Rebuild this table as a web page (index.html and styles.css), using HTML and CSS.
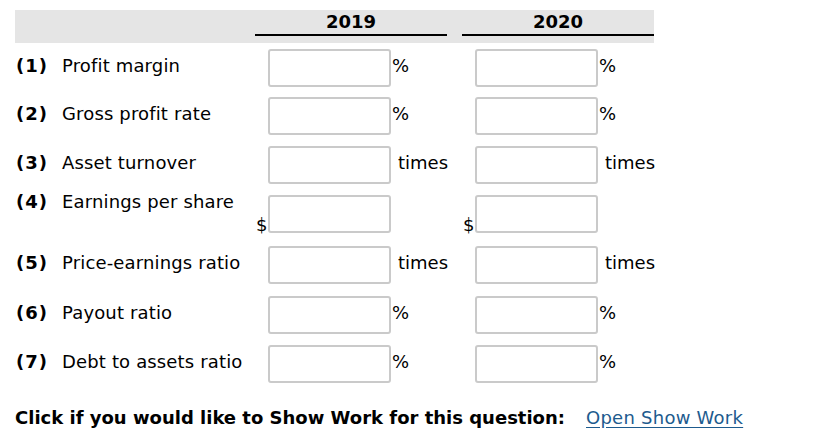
FILE: index.html
```html
<!DOCTYPE html>
<html>
<head>
<meta charset="utf-8">
<link rel="stylesheet" href="styles.css">
</head>
<body>
<div class="page">
  <div class="head">
    <div></div>
    <div class="year">2019</div>
    <div class="year">2020</div>
  </div>

  <div class="row first">
    <div class="label"><b class="num">(1)</b>Profit margin</div>
    <div class="cell"><span class="pre"></span><span class="box"></span><span class="unit">%</span></div>
    <div class="cell"><span class="pre"></span><span class="box"></span><span class="unit">%</span></div>
  </div>
  <div class="row">
    <div class="label"><b class="num">(2)</b>Gross profit rate</div>
    <div class="cell"><span class="pre"></span><span class="box"></span><span class="unit">%</span></div>
    <div class="cell"><span class="pre"></span><span class="box"></span><span class="unit">%</span></div>
  </div>
  <div class="row">
    <div class="label"><b class="num">(3)</b>Asset turnover</div>
    <div class="cell"><span class="pre"></span><span class="box"></span><span class="unit times">times</span></div>
    <div class="cell"><span class="pre"></span><span class="box"></span><span class="unit times">times</span></div>
  </div>
  <div class="row tall">
    <div class="label top"><b class="num">(4)</b>Earnings per share</div>
    <div class="cell"><span class="pre">$</span><span class="box"></span><span class="unit"></span></div>
    <div class="cell"><span class="pre">$</span><span class="box"></span><span class="unit"></span></div>
  </div>
  <div class="row mid">
    <div class="label"><b class="num">(5)</b>Price-earnings ratio</div>
    <div class="cell"><span class="pre"></span><span class="box"></span><span class="unit times">times</span></div>
    <div class="cell"><span class="pre"></span><span class="box"></span><span class="unit times">times</span></div>
  </div>
  <div class="row">
    <div class="label"><b class="num">(6)</b>Payout ratio</div>
    <div class="cell"><span class="pre"></span><span class="box"></span><span class="unit">%</span></div>
    <div class="cell"><span class="pre"></span><span class="box"></span><span class="unit">%</span></div>
  </div>
  <div class="row">
    <div class="label"><b class="num">(7)</b>Debt to assets ratio</div>
    <div class="cell"><span class="pre"></span><span class="box"></span><span class="unit">%</span></div>
    <div class="cell"><span class="pre"></span><span class="box"></span><span class="unit">%</span></div>
  </div>

  <div class="foot">
    <b class="ask">Click if you would like to Show Work for this question:</b>
    <a class="link" href="#">Open Show Work</a>
  </div>
</div>
</body>
</html>
```
FILE: styles.css
```css
* { box-sizing: border-box; }
body {
  margin: 0;
  background: #fff;
  color: #000;
  font-family: "DejaVu Sans", Verdana, sans-serif;
  font-size: 18px;
  line-height: 21px;
}
.page {
  padding: 10px 0 0 15px;
}
.head {
  display: grid;
  grid-template-columns: 225px 192px 192px;
  column-gap: 15px;
  width: 639px;
  background: #e5e5e5;
  padding: 1px 0 7px;
}
.year {
  font-weight: bold;
  text-align: center;
  padding-bottom: 2px;
  border-bottom: 2px solid #000;
}
.row {
  display: grid;
  grid-template-columns: 225px 192px 192px;
  column-gap: 15px;
  width: 639px;
  height: 49px;
}
.row.first { margin-top: 6px; height: 48px; }
.row.tall { height: 51px; }
.row.mid { height: 50px; }
.label {
  display: flex;
  padding-top: 6px;
  white-space: nowrap;
  letter-spacing: 0.15px;
}
.label.top { margin-top: -10px; }
.num {
  flex: 0 0 47px;
  width: 47px;
  padding-left: 1px;
  letter-spacing: 1px;
}
.cell {
  display: flex;
  align-items: flex-start;
}
.pre {
  flex: 0 0 13px;
  width: 13px;
  height: 38px;
  padding-top: 19px;
  padding-left: 1px;
}
.box {
  flex: 0 0 123px;
  width: 123px;
  height: 38px;
  border: 2px solid #cacaca;
  border-radius: 3px;
  background: #fff;
}
.unit {
  padding-top: 6px;
  margin-left: 1px;
}
.unit.times { margin-left: 7px; }
.foot {
  margin-top: 13px;
  display: flex;
  align-items: baseline;
  white-space: nowrap;
}
.link {
  margin-left: 21px;
  color: #1d5b8e;
  letter-spacing: 0.25px;
  text-decoration: underline;
  text-decoration-thickness: 2px;
  text-underline-offset: 3px;
}
```
